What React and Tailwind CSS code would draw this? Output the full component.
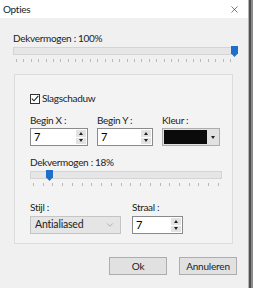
import { X, ChevronDown } from 'lucide-react'

const FONT = { fontFamily: 'Lato, "Noto Sans", sans-serif' }
const LABEL = 'text-[10px] leading-[13px] tracking-[-0.3px] text-[#222]'

function Ticks({ count }) {
  return (
    <div className="flex justify-between px-[3px] h-[3px]">
      {Array.from({ length: count }).map((_, i) => (
        <span key={i} className="w-px h-[3px] bg-[#b8b8b8]" />
      ))}
    </div>
  )
}

function Slider({ width, pos, ticks }) {
  return (
    <div style={{ width }}>
      <div className="relative h-[8px] bg-[#e6e6e6] border border-[#d4d4d4]">
        <div
          className="absolute top-[-2px] w-[7px] h-[11px] bg-[#1f6fc9] [clip-path:polygon(0_0,100%_0,100%_65%,50%_100%,0_65%)]"
          style={{ left: pos }}
        />
      </div>
      <div className="mt-[4px]">
        <Ticks count={ticks} />
      </div>
    </div>
  )
}

function Spinner({ width }) {
  return (
    <div className="flex h-[18px] bg-white border border-[#8a8a8a]" style={{ width }}>
      <span className="flex-1 pl-[3px] text-[11px] leading-[16px] text-black">7</span>
      <div className="flex flex-col w-[10px] my-[1px] mr-[1px] gap-px">
        <div className="flex-1 bg-[#e2e2e2] flex items-center justify-center">
          <span className="w-0 h-0 border-x-[2px] border-x-transparent border-b-[3px] border-b-[#222]" />
        </div>
        <div className="flex-1 bg-[#e2e2e2] flex items-center justify-center">
          <span className="w-0 h-0 border-x-[2px] border-x-transparent border-t-[3px] border-t-[#222]" />
        </div>
      </div>
    </div>
  )
}

function Button({ children }) {
  return (
    <div className="w-[58px] h-[18px] flex items-center justify-center bg-[#e1e1e1] border border-[#adadad] text-[10px] tracking-[-0.2px] text-[#222]">
      {children}
    </div>
  )
}

export default function App() {
  return (
    <div className="w-[253px] h-[288px] flex overflow-hidden" style={FONT}>
      <div className="w-[248px] flex flex-col bg-[#f0f0f0]">
        <div className="h-[18px] bg-white flex items-center justify-between pl-[3px] pr-[8px]">
          <span className={LABEL}>Opties</span>
          <X size={11} strokeWidth={1.3} className="text-[#222]" />
        </div>

        <div className="pl-[13px] pr-[15px]">
          <div className={`mt-[14px] ${LABEL}`}>Dekvermogen : 100%</div>
          <div className="mt-[2px]">
            <Slider width={221} pos={217} ticks={30} />
          </div>

          <div className="mt-[12px] ml-px h-[170px] border border-[#dcdcdc] bg-[#f3f3f3] pl-[15px] pt-[17px]">
            <div className="flex items-center gap-[2px]">
              <span className="w-[10px] h-[10px] border border-[#333] bg-white flex items-center justify-center">
                <svg width="8" height="7" viewBox="0 0 8 7">
                  <path d="M0.8 3.6 L3 5.8 L7.3 0.8" fill="none" stroke="#222" strokeWidth="1.1" />
                </svg>
              </span>
              <span className={LABEL}>Slagschaduw</span>
            </div>

            <div className="mt-[9px] flex">
              <div className="w-[67px]">
                <div className={LABEL}>Begin X :</div>
                <div className="mt-[1px]"><Spinner width={58} /></div>
              </div>
              <div className="w-[65px]">
                <div className={LABEL}>Begin Y :</div>
                <div className="mt-[1px]"><Spinner width={56} /></div>
              </div>
              <div>
                <div className={LABEL}>Kleur :</div>
                <div className="mt-[1px] w-[58px] h-[18px] flex items-center bg-[#e1e1e1] border border-[#adadad] pl-px">
                  <span className="w-[43px] h-[14px] bg-[#0b0b0b]" />
                  <span className="flex-1 flex justify-center">
                    <span className="w-0 h-0 border-x-[2px] border-x-transparent border-t-[3px] border-t-[#222]" />
                  </span>
                </div>
              </div>
            </div>

            <div className={`mt-[10px] ${LABEL}`}>Dekvermogen : 18%</div>
            <div className="mt-[2px]">
              <Slider width={192} pos={15} ticks={20} />
            </div>

            <div className="mt-[15px] flex">
              <div className="w-[102px]">
                <div className={LABEL}>Stijl :</div>
                <div className="mt-[2px] w-[91px] h-[18px] flex items-center justify-between bg-[#e5e5e5] border border-[#c4c4c4] pl-[4px] pr-[5px]">
                  <span className="text-[10.5px] tracking-[-0.2px] text-[#222]">Antialiased</span>
                  <ChevronDown size={10} strokeWidth={1.2} className="text-[#777]" />
                </div>
              </div>
              <div>
                <div className={LABEL}>Straal :</div>
                <div className="mt-[2px]"><Spinner width={51} /></div>
              </div>
            </div>
          </div>

          <div className="mt-[13px] -mr-[4px] flex justify-end gap-[12px]">
            <Button>Ok</Button>
            <Button>Annuleren</Button>
          </div>
        </div>
      </div>
      <div className="w-px bg-[#b5b5b5]" />
      <div className="w-[2px] bg-[#4f4f4f]" />
      <div className="flex-1 bg-[#8c8c8c]" />
    </div>
  )
}
